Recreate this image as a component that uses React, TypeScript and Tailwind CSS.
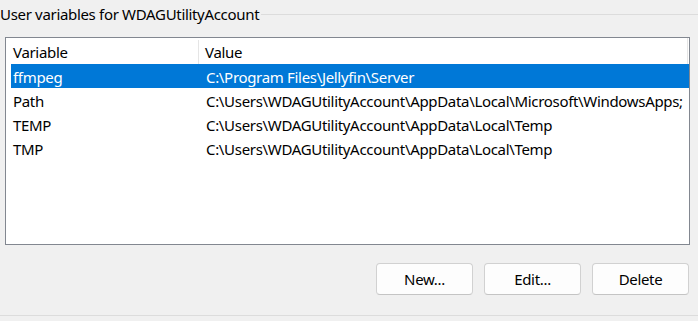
import React from "react";

const rows = [
  { name: "ffmpeg", value: "C:\\Program Files\\Jellyfin\\Server", selected: true },
  { name: "Path", value: "C:\\Users\\WDAGUtilityAccount\\AppData\\Local\\Microsoft\\WindowsApps;" },
  { name: "TEMP", value: "C:\\Users\\WDAGUtilityAccount\\AppData\\Local\\Temp" },
  { name: "TMP", value: "C:\\Users\\WDAGUtilityAccount\\AppData\\Local\\Temp" },
];

function Btn({ label }: { label: string }) {
  return (
    <button className="w-[97px] h-[32px] rounded-[4px] border border-[#d1d1d1] border-b-[#c4c4c4] bg-[#fdfdfd] text-[15px] text-black leading-none flex items-center justify-center">
      {label}
    </button>
  );
}

export default function App() {
  return (
    <div
      className="w-[698px] h-[321px] bg-[#f0f0f0] text-black overflow-hidden flex flex-col tracking-[-0.32px]"
      style={{ fontFamily: '"Noto Sans", "Segoe UI", sans-serif' }}
    >
      <div className="flex items-start h-[37px]">
        <span className="text-[15px] leading-[20px] pt-[4px] whitespace-nowrap">
          User variables for WDAGUtilityAccount
        </span>
        <div className="flex-1 h-px bg-[#dcdcdc] mt-[14px] ml-[2px]" />
      </div>
      <div className="ml-[5px] w-[685px] h-[208px] border border-[#828790] bg-white pl-[5px] flex flex-col">
        <div className="flex h-[26px] items-center text-[15px] leading-[20px] pt-[2px] border-r border-[#e5e5e5] mr-[1px]">
          <div className="w-[188px] shrink-0 pl-[2px] h-full flex items-center border-r border-[#e5e5e5]">Variable</div>
          <div className="pl-[6px]">Value</div>
        </div>
        {rows.map((r) => (
          <div
            key={r.name}
            className={
              "flex h-[24px] items-center text-[15px] leading-[20px] pt-[2px] whitespace-nowrap " +
              (r.selected ? "bg-[#0078d7] text-white" : "")
            }
          >
            <div className="w-[189px] shrink-0 pl-[2px]">{r.name}</div>
            <div className="pl-[6px]">{r.value}</div>
          </div>
        ))}
      </div>
      <div className="flex justify-end gap-[11px] mt-[18px] mr-[9px]">
        <Btn label="New..." />
        <Btn label="Edit..." />
        <Btn label="Delete" />
      </div>
      <div className="mt-[20px] h-px bg-[#dcdcdc]" />
    </div>
  );
}
